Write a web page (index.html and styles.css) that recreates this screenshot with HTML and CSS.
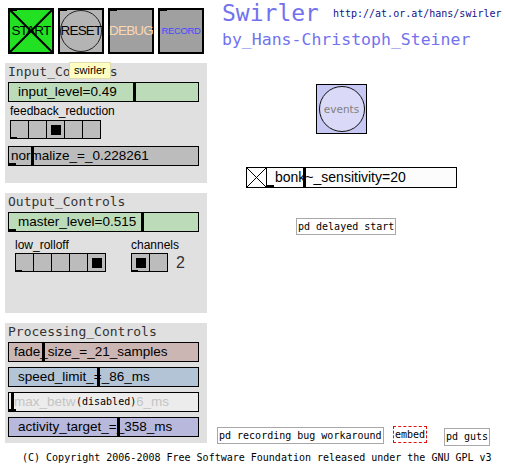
FILE: index.html
```html
<!DOCTYPE html>
<html lang="en">

<head>
    <meta charset="UTF-8">
    <title>Swirler</title>
    <link rel="stylesheet" href="styles.css">
</head>

<body>
    <div class="page">
        <!-- Left column: transport buttons and control panels -->
        <div class="left">
            <div class="buttons">
                <div class="bng start">
                    <svg class="bng-art" viewBox="0 0 42 42"><line x1="0" y1="0" x2="42" y2="42" /><line x1="42" y1="0" x2="0" y2="42" /></svg>
                    <span>START</span>
                </div>
                <div class="bng reset">
                    <svg class="bng-art" viewBox="0 0 42 42"><circle cx="21" cy="21" r="20.5" /></svg>
                    <span>RESET</span>
                </div>
                <div class="bng debug"><span>DEBUG</span></div>
                <div class="bng record"><span>RECORD</span></div>
            </div>

            <div class="tooltip">swirler</div>

            <section class="panel">
                <div class="panel-title">Input_Controls</div>
                <div class="hsl green">
                    <span class="hsl-label" style="padding-left: 9px">input_level=0.49</span>
                    <i class="knob" style="left: 124px"></i>
                </div>
                <div class="radio-label indent">feedback_reduction</div>
                <div class="vradio indent mark-out">
                    <i></i><i></i><i class="on"></i><i></i><i></i>
                </div>
                <div class="hsl gray mark-out spaced">
                    <span class="hsl-label" style="padding-left: 2px">normalize_=_0.228261</span>
                    <i class="knob" style="left: 22px"></i>
                </div>
            </section>

            <section class="panel">
                <div class="panel-title">Output_Controls</div>
                <div class="hsl green mark-out">
                    <span class="hsl-label" style="padding-left: 9px">master_level=0.515</span>
                    <i class="knob" style="left: 132px"></i>
                </div>
                <div class="radio-row">
                    <div class="radio-group">
                        <div class="radio-label">low_rolloff</div>
                        <div class="vradio mark-out">
                            <i></i><i></i><i></i><i></i><i class="on"></i>
                        </div>
                    </div>
                    <div class="radio-group channels">
                        <div class="radio-label">channels</div>
                        <div class="radio-with-num">
                            <div class="vradio mark-out">
                                <i class="on"></i><i></i>
                            </div>
                            <span class="num">2</span>
                        </div>
                    </div>
                </div>
            </section>

            <section class="panel">
                <div class="panel-title">Processing_Controls</div>
                <div class="hsl rose">
                    <span class="hsl-label" style="padding-left: 5px">fade_size_=_21_samples</span>
                    <i class="knob" style="left: 33px"></i>
                </div>
                <div class="hsl steel">
                    <span class="hsl-label" style="padding-left: 9px">speed_limit_=_86_ms</span>
                    <i class="knob" style="left: 88px"></i>
                </div>
                <div class="hsl pale disabled mark-out">
                    <span class="hsl-label" style="padding-left: 5px">max_between_=_106_ms</span>
                    <i class="knob" style="left: 2px"></i>
                    <span class="disabled-tag">(disabled)</span>
                </div>
                <div class="hsl lavender">
                    <span class="hsl-label" style="padding-left: 9px">activity_target_=_358_ms</span>
                    <i class="knob" style="left: 108px"></i>
                </div>
            </section>
        </div>

        <!-- Right column: title and patch objects -->
        <div class="right">
            <div class="title-row">
                <div class="app-name">Swirler</div>
                <div class="url">http://at.or.at/hans/swirler</div>
            </div>
            <div class="author">by_Hans-Christoph_Steiner</div>

            <div class="events">
                <div class="events-circle">events</div>
            </div>

            <div class="bonk">
                <div class="tgl">
                    <svg viewBox="0 0 19 19"><line x1="0" y1="0" x2="19" y2="19" /><line x1="19" y1="0" x2="0" y2="19" /></svg>
                </div>
                <div class="hsl white mark-out">
                    <span class="hsl-label" style="padding-left: 8px">bonk~_sensitivity=20</span>
                    <i class="knob" style="left: 36px"></i>
                </div>
            </div>

            <div class="pd-box delayed">pd delayed start</div>
            <div class="pd-box recording">pd recording bug workaround</div>
            <div class="pd-box embed">embed</div>
            <div class="pd-box guts">pd guts</div>
        </div>

        <div class="footer">(C) Copyright 2006-2008 Free Software Foundation released under the GNU GPL v3</div>
    </div>
</body>

</html>
```

FILE: styles.css
```css
/* General */
body {
    margin: 0;
    background-color: #fff;
    color: #000;
    font-family: "Liberation Sans", Arial, sans-serif;
}

.page {
    width: 505px;
    height: 468px;
    display: grid;
    grid-template-columns: 215px 290px;
    grid-template-rows: 443px 25px;
}

/* Left column */
.left {
    position: relative;
    padding: 8px 0 0 5px;
}

.buttons {
    display: flex;
    gap: 4px;
    padding-left: 3px;
}

.bng {
    position: relative;
    width: 46px;
    height: 46px;
    box-sizing: border-box;
    border: 2px solid #000;
    display: flex;
    align-items: center;
    justify-content: center;
    font-size: 13.5px;
    letter-spacing: -0.8px;
    white-space: nowrap;
}

.bng::before {
    content: "";
    position: absolute;
    top: 0;
    left: 0;
    width: 7px;
    height: 1px;
    background-color: #000;
}

.bng span {
    position: relative;
    margin-top: -1px;
}

.bng-art {
    position: absolute;
    top: 0;
    left: 0;
    width: 42px;
    height: 42px;
}

.bng-art line {
    stroke: #000;
    stroke-width: 2;
}

.bng-art circle {
    fill: none;
    stroke: #222;
    stroke-width: 1;
}

.start {
    background-color: #22e022;
}

.reset {
    background-color: #b4b4b4;
}

.debug {
    background-color: #a0a0a0;
    color: #fcd8b0;
}

.record {
    background-color: #a0a0a0;
    color: #4848ff;
    font-size: 9.5px;
    letter-spacing: -0.4px;
}

.tooltip {
    position: absolute;
    top: 62px;
    left: 69px;
    padding: 0 4px;
    font-size: 11px;
    line-height: 15px;
    background-color: #ffffc4;
    border: 1px solid #dcdcac;
    z-index: 5;
}

/* Panels */
.panel {
    width: 202px;
    height: 120px;
    box-sizing: border-box;
    padding-left: 3px;
    margin-top: 10px;
    background-color: #e0e0e0;
}

.buttons + .tooltip + .panel {
    margin-top: 9px;
}

.panel-title {
    font-family: "DejaVu Sans Mono", monospace;
    font-size: 13px;
    line-height: 17px;
    color: #333;
    margin-bottom: 2px;
}

/* Horizontal sliders */
.hsl {
    position: relative;
    width: 191px;
    height: 20px;
    box-sizing: border-box;
    border: 1px solid #000;
    font-size: 13.5px;
    line-height: 18px;
    white-space: nowrap;
    overflow: hidden;
}

.hsl + .hsl {
    margin-top: 5px;
}

.hsl.spaced {
    margin-top: 7px;
}

.hsl-label {
    display: block;
}

.knob {
    position: absolute;
    top: 0;
    bottom: 0;
    width: 3px;
    background-color: #000;
}

.mark-out {
    position: relative;
}

.mark-out::before {
    content: "";
    position: absolute;
    left: 0;
    bottom: 0;
    width: 7px;
    height: 2px;
    background-color: #000;
    z-index: 2;
}

.green { background-color: #bcdbb8; }
.gray { background-color: #bcbcbc; }
.rose { background-color: #cbb6b4; }
.steel { background-color: #b3c4d6; }
.pale { background-color: #ececec; }
.lavender { background-color: #b8b8dc; }
.white { background-color: #fcfcfc; }

.disabled .hsl-label {
    color: #c4c4c4;
}

.disabled-tag {
    position: absolute;
    top: 0;
    left: 67px;
    font-family: "DejaVu Sans Mono", monospace;
    font-size: 10px;
    line-height: 18px;
    background-color: #ececec;
    padding-right: 1px;
}

/* Radio rows */
.indent {
    margin-left: 2px;
}

.radio-label {
    font-size: 12px;
    line-height: 18px;
}

.radio-row {
    display: flex;
    margin: 6px 0 0 7px;
}

.radio-row .radio-label {
    line-height: 15px;
}

.channels {
    margin-left: 25px;
}

.radio-with-num {
    display: flex;
    align-items: center;
}

.num {
    margin-left: 8px;
    font-size: 16px;
    color: #333;
}

.vradio {
    display: flex;
    width: max-content;
}

.vradio i {
    width: 19px;
    height: 19px;
    box-sizing: border-box;
    border: 1px solid #000;
    background-color: #bcbcbc;
    display: flex;
    align-items: center;
    justify-content: center;
}

.vradio i + i {
    margin-left: -1px;
}

.vradio i.on::after {
    content: "";
    width: 10px;
    height: 10px;
    background-color: #000;
}

/* Right column */
.right {
    position: relative;
}

.title-row {
    display: flex;
    align-items: flex-start;
    padding-left: 7px;
}

.app-name {
    font-family: "DejaVu Sans Mono", monospace;
    font-size: 23px;
    line-height: 26px;
    color: #7272ee;
}

.url {
    font-family: "DejaVu Sans Mono", monospace;
    font-size: 10px;
    line-height: 12px;
    color: #12128c;
    margin: 8px 0 0 14px;
}

.author {
    font-family: "DejaVu Sans Mono", monospace;
    font-size: 16.5px;
    line-height: 19px;
    color: #7272ee;
    padding-left: 7px;
    margin-top: 4px;
}

/* Patch objects placed on the canvas */
.events {
    position: absolute;
    top: 84px;
    left: 101px;
    width: 51px;
    height: 50px;
    box-sizing: border-box;
    border: 1px solid #000;
    background-color: #c8c8f4;
    display: flex;
    align-items: center;
    justify-content: center;
}

.events-circle {
    width: 46px;
    height: 46px;
    box-sizing: border-box;
    border: 1px solid #111;
    border-radius: 50%;
    background-color: #dadaf8;
    display: flex;
    align-items: center;
    justify-content: center;
    font-family: "DejaVu Sans", sans-serif;
    font-size: 10.5px;
    color: #808080;
}

.bonk {
    position: absolute;
    top: 167px;
    left: 31px;
    display: flex;
}

.tgl {
    width: 21px;
    height: 21px;
    box-sizing: border-box;
    border: 1px solid #000;
    background-color: #fcfcfc;
}

.tgl svg {
    display: block;
    width: 19px;
    height: 19px;
}

.tgl line {
    stroke: #000;
    stroke-width: 1;
}

.bonk .hsl {
    height: 21px;
    margin-left: -1px;
    font-size: 14px;
    line-height: 19px;
}

.pd-box {
    position: absolute;
    padding: 0 1px;
    font-family: "DejaVu Sans Mono", monospace;
    font-size: 10px;
    line-height: 15px;
    border: 1px solid #a8a8a8;
    background-color: #fff;
    white-space: nowrap;
}

.delayed {
    top: 218px;
    left: 81px;
}

.recording {
    top: 427px;
    left: 2px;
}

.embed {
    top: 426px;
    left: 178px;
    border: 1px dashed #e01010;
}

.guts {
    top: 428px;
    left: 229px;
    line-height: 16px;
}

.footer {
    grid-column: 1 / -1;
    padding: 6px 0 0 22px;
    font-family: "DejaVu Sans Mono", monospace;
    font-size: 10px;
    line-height: 18px;
}
```
